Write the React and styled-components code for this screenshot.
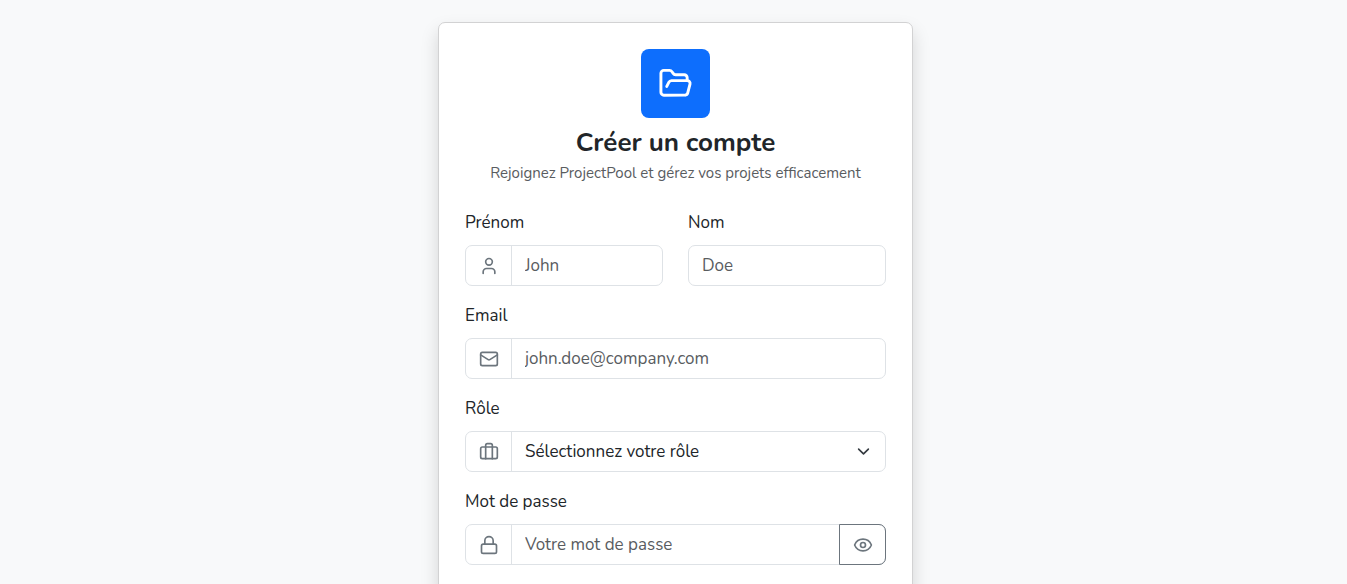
import React, { useState } from 'react';
import styled, { createGlobalStyle } from 'styled-components';
import { Briefcase, Eye, EyeOff, FolderOpen, Lock, Mail, User } from 'lucide-react';

const GlobalStyle = createGlobalStyle`
  *, *::before, *::after { box-sizing: border-box; }
  body {
    margin: 0;
    background: #f8f9fa;
    color: #212529;
    font-family: Nunito, Roboto, "Liberation Sans", sans-serif;
    font-size: 17px;
    line-height: 26px;
  }
`;

const Page = styled.main`
  display: flex;
  justify-content: center;
  padding: 22px 12px 22px 16px;
`;

const Card = styled.form`
  width: 100%;
  max-width: 475px;
  padding: 26px;
  background: #fff;
  border: 1px solid #d2d2d3;
  border-radius: 7px;
  box-shadow: 0 9px 18px rgba(0, 0, 0, 0.15);
`;

const Header = styled.header`
  display: flex;
  flex-direction: column;
  align-items: center;
  margin-bottom: 26px;
  text-align: center;
`;

const Logo = styled.div`
  display: grid;
  place-items: center;
  width: 69px;
  height: 69px;
  margin-bottom: 9px;
  border-radius: 8px;
  background: #0d6efd;
  color: #fff;
`;

const Title = styled.h1`
  margin: 0 0 3px;
  font-size: 26px;
  font-weight: 700;
  line-height: 32px;
`;

const Subtitle = styled.p`
  margin: 0;
  font-size: 15px;
  line-height: 22px;
  color: #595c5f;
`;

const Fields = styled.div`
  display: flex;
  flex-direction: column;
  gap: 17px;
`;

const FieldRow = styled.div`
  display: grid;
  grid-template-columns: 1fr 1fr;
  gap: 25px;
`;

const FieldBox = styled.div`
  min-width: 0;
`;

const Label = styled.label`
  display: block;
  width: fit-content;
  margin-bottom: 9px;
`;

const Group = styled.div`
  display: flex;
  height: 41px;
  border: 1px solid #dee2e6;
  border-radius: 7px;
  background: #fff;

  &:focus-within { border-color: #86b7fe; }
`;

const Addon = styled.span`
  display: grid;
  place-items: center;
  flex: none;
  width: 46px;
  border-right: 1px solid #dee2e6;
  color: #6c757d;
`;

const Input = styled.input`
  flex: 1;
  min-width: 0;
  padding: 0 13px;
  border: 0;
  border-radius: 7px;
  outline: 0;
  background: transparent;
  color: inherit;
  font: inherit;

  &::placeholder { color: #595c5f; opacity: 1; }
`;

const SelectBox = styled.div`
  display: grid;
  flex: 1;
  align-items: center;
  min-width: 0;

  > * { grid-area: 1 / 1; }
`;

const Select = styled.select`
  appearance: none;
  width: 100%;
  height: 100%;
  padding: 0 40px 0 13px;
  border: 0;
  border-radius: 7px;
  outline: 0;
  background: transparent;
  color: inherit;
  font: inherit;
`;

const Chevron = styled.svg`
  justify-self: end;
  width: 13px;
  height: 13px;
  margin-right: 15px;
  fill: none;
  stroke: #343a40;
  stroke-width: 2;
  stroke-linecap: round;
  stroke-linejoin: round;
  pointer-events: none;
`;

const ToggleButton = styled.button`
  display: grid;
  place-items: center;
  flex: none;
  width: 47px;
  margin: -1px;
  padding: 0;
  border: 1px solid #6c757d;
  border-radius: 0 7px 7px 0;
  background: transparent;
  color: #6c757d;
  cursor: pointer;
`;

function Field({ id, label, icon: Icon, children }) {
  return (
    <FieldBox>
      <Label htmlFor={id}>{label}</Label>
      <Group>
        {Icon && <Addon><Icon size={20} aria-hidden="true" /></Addon>}
        {children}
      </Group>
    </FieldBox>
  );
}

export default function App() {
  const [visible, setVisible] = useState(false);
  const ToggleIcon = visible ? EyeOff : Eye;

  return (
    <>
      <GlobalStyle />
      <Page>
        <Card onSubmit={(event) => event.preventDefault()}>
          <Header>
            <Logo><FolderOpen size={35} aria-hidden="true" /></Logo>
            <Title>Créer un compte</Title>
            <Subtitle>Rejoignez ProjectPool et gérez vos projets efficacement</Subtitle>
          </Header>
          <Fields>
            <FieldRow>
              <Field id="first-name" label="Prénom" icon={User}>
                <Input id="first-name" type="text" placeholder="John" />
              </Field>
              <Field id="last-name" label="Nom">
                <Input id="last-name" type="text" placeholder="Doe" />
              </Field>
            </FieldRow>
            <Field id="email" label="Email" icon={Mail}>
              <Input id="email" type="email" placeholder="john.doe@company.com" />
            </Field>
            <Field id="role" label="Rôle" icon={Briefcase}>
              <SelectBox>
                <Select id="role" defaultValue="">
                  <option value="">Sélectionnez votre rôle</option>
                </Select>
                <Chevron viewBox="0 0 16 16" aria-hidden="true">
                  <path d="m2 5 6 6 6-6" />
                </Chevron>
              </SelectBox>
            </Field>
            <Field id="password" label="Mot de passe" icon={Lock}>
              <Input
                id="password"
                type={visible ? 'text' : 'password'}
                placeholder="Votre mot de passe"
              />
              <ToggleButton
                type="button"
                aria-label={visible ? 'Masquer le mot de passe' : 'Afficher le mot de passe'}
                onClick={() => setVisible(!visible)}
              >
                <ToggleIcon size={20} aria-hidden="true" />
              </ToggleButton>
            </Field>
          </Fields>
        </Card>
      </Page>
    </>
  );
}
